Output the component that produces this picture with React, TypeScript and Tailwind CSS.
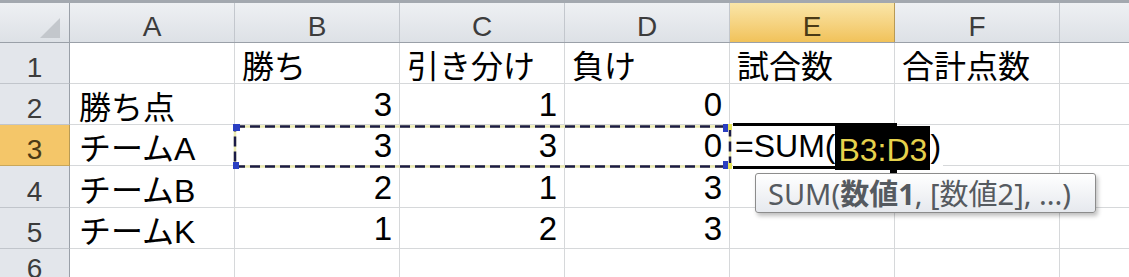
import React from "react";

const colW = [165, 165, 165, 165, 165, 165];
const letters = ["A", "B", "C", "D", "E", "F"];
const rowH = ["h-[41px]", "h-[41px]", "h-[41px]", "h-[42px]", "h-[41px]"];

type Cell = { t: string; num?: boolean } | null;

const data: Cell[][] = [
  [null, { t: "勝ち" }, { t: "引き分け" }, { t: "負け" }, { t: "試合数" }, { t: "合計点数" }],
  [{ t: "勝ち点" }, { t: "3", num: true }, { t: "1", num: true }, { t: "0", num: true }, null, null],
  [{ t: "チームA" }, { t: "3", num: true }, { t: "3", num: true }, { t: "0", num: true }, null, null],
  [{ t: "チームB" }, { t: "2", num: true }, { t: "1", num: true }, { t: "3", num: true }, null, null],
  [{ t: "チームK" }, { t: "1", num: true }, { t: "2", num: true }, { t: "3", num: true }, null, null],
];

export default function App() {
  return (
    <div className="relative w-[1129px] h-[277px] overflow-hidden bg-white font-['Liberation_Sans','Noto_Sans_CJK_JP',sans-serif] text-black">
      <div className="h-[3px] bg-[#a3a8af]" />
      {/* Column header */}
      <div className="flex h-[40px] border-b border-[#9aa0a8] bg-linear-to-b from-[#eef0f3] to-[#dde1e6]">
        <div className="relative w-[70px] shrink-0 border-r border-[#9aa0a8]">
          <svg className="absolute left-[40px] top-[15px]" width="20" height="20" viewBox="0 0 20 20">
            <polygon points="0,20 20,0 20,20" fill="#c3c7cc" />
          </svg>
        </div>
        {letters.map((l, i) => (
          <div
            key={l}
            style={{ width: colW[i] }}
            className={
              "shrink-0 flex items-end justify-center border-r text-[28px] leading-none pb-[1px] " +
              (l === "E"
                ? "bg-linear-to-b from-[#fae6a8] to-[#f1c259] border-[#b89a55] text-[#4a3a16]"
                : "border-[#c3c7cd] text-[#3c3c3c]")
            }
          >
            {l}
          </div>
        ))}
        <div className="flex-1" />
      </div>
      {/* Rows */}
      {data.map((row, r) => (
        <div key={r} className={"flex " + rowH[r]}>
          <div
            className={
              "w-[70px] shrink-0 flex items-end justify-center border-r border-b text-[28px] leading-none pb-[1px] " +
              (r === 2
                ? "bg-[#f4c669] border-r-[#b89a55] border-b-[#c9a75a] text-[#4a3a16]"
                : "bg-[#e3e6eb] border-r-[#9aa0a8] border-b-[#c1c5cb] text-[#3c3c3c]")
            }
          >
            {r + 1}
          </div>
          {row.map((c, i) => (
            <div
              key={i}
              style={{ width: colW[i] }}
              className={
                "shrink-0 flex items-end border-r border-b border-[#d6d8da] leading-none whitespace-nowrap " +
                (c?.num ? "justify-end pr-[7px] pb-[3px] text-[33px]" : (i === 0 ? "pl-[9px]" : "pl-[7px]") + " text-[32px] pb-[0px]")
              }
            >
              {c ? c.t : ""}
            </div>
          ))}
          <div className="flex-1 border-b border-[#d6d8da]" />
        </div>
      ))}
      <div className="flex h-[28px]">
        <div className="w-[70px] shrink-0 flex justify-center border-r border-[#9aa0a8] bg-[#e3e6eb] text-[28px] leading-none pt-[6px] text-[#3c3c3c]">
          6
        </div>
        {colW.map((w, i) => (
          <div key={i} style={{ width: w }} className="shrink-0 border-r border-[#d6d8da]" />
        ))}
        <div className="flex-1" />
      </div>

      {/* Marquee around B3:D3 */}
      <svg className="absolute left-[232px] top-[123px]" width="502" height="48" viewBox="0 0 502 48">
        <rect x="3" y="3.5" width="495" height="40" fill="none" stroke="#ecebb0" strokeWidth="2.5" />
        <rect x="3" y="3.5" width="495" height="40" fill="none" stroke="#1b1b45" strokeWidth="2.5" strokeDasharray="10 5" />
        <rect x="1" y="1" width="7" height="7" fill="#2a3fc2" />
        <rect x="1" y="39" width="6" height="7" fill="#2a3fc2" />
        <rect x="491" y="1" width="5" height="8" fill="#2a3fc2" />
        <rect x="491" y="38" width="5" height="8" fill="#2a3fc2" />
        <rect x="496" y="1" width="4" height="6" fill="#e8e65a" />
        <rect x="496" y="40" width="4" height="6" fill="#e8e65a" />
      </svg>

      {/* Active cell E3 */}
      <div className="absolute left-[733px] top-[123px] w-[164px] h-[46px] border-y-[3px] border-black" />
      <div className="absolute left-[889px] top-[166px] w-[9px] h-[9px] bg-black border border-white" />
      <div className="absolute left-[733px] top-[126px] h-[40px] flex items-end bg-white text-[32px] leading-none whitespace-nowrap">
        <span className="pl-[2px] pb-[4px]">=SUM(</span>
        <span className="bg-black text-[#e6d24c] h-[44px] flex items-end pb-[4px] px-[3px] mb-[-4px]">B3:D3</span>
        <span className="pb-[4px] pr-[2px]">)</span>
      </div>

      {/* Tooltip */}
      <div className="absolute left-[755px] top-[173px] w-[341px] h-[40px] rounded-[3px] border border-[#8c8c8c] bg-linear-to-b from-[#ffffff] to-[#e6e9ee] shadow-[2px_3px_4px_rgba(0,0,0,0.25)] flex items-center pl-[12px] font-['Noto_Sans','Noto_Sans_CJK_JP',sans-serif] text-[29px] leading-none text-[#555a60] whitespace-nowrap">
        SUM(<span className="font-bold">数値1</span>, [数値2], ...)
      </div>
    </div>
  );
}
